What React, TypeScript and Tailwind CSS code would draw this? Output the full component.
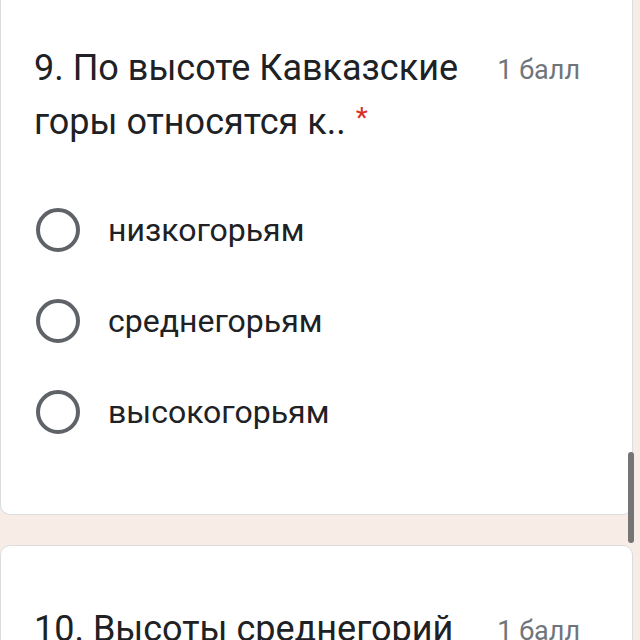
import React from "react";

const options = ["низкогорьям", "среднегорьям", "высокогорьям"];

function Radio() {
  return <div className="w-[44px] h-[44px] rounded-full border-[4px] border-[#5f6368] shrink-0" />;
}

export default function App() {
  return (
    <div
      className="relative w-[640px] h-[640px] overflow-hidden bg-[#f8ece6]"
      style={{ fontFamily: "Roboto, 'Noto Sans', sans-serif" }}
    >
      <div className="flex flex-col gap-[30px] w-[633px]">
        <div className="bg-white border border-t-0 border-[#dadce0] rounded-b-[10px] h-[515px] pl-[33px] pr-[52px] pt-[41px]">
          <div className="flex justify-between items-start">
            <div className="text-[36px] leading-[54px] text-[#202124] w-[440px]">
              9. По высоте Кавказские горы относятся к..
              <span className="text-[#d93025] text-[28px] relative top-[-7px] ml-[10px]">*</span>
            </div>
            <div className="text-[27px] leading-[54px] text-[#70757a] pt-[2px]">1 балл</div>
          </div>
          <div className="flex flex-col gap-[47px] mt-[56px] pl-[2px]">
            {options.map((o) => (
              <div key={o} className="flex items-center gap-[28px] h-[44px]">
                <Radio />
                <span className="text-[32px] text-[#202124]">{o}</span>
              </div>
            ))}
          </div>
        </div>
        <div className="bg-white border border-[#dadce0] rounded-t-[10px] h-[200px] pl-[33px] pr-[52px] pt-[56px]">
          <div className="flex justify-between items-start">
            <div className="text-[36px] leading-[54px] text-[#202124] whitespace-nowrap">
              10. Высоты среднегорий
            </div>
            <div className="text-[27px] leading-[54px] text-[#70757a] pt-[2px]">1 балл</div>
          </div>
        </div>
      </div>
      <div className="absolute left-[628px] top-[452px] w-[6px] h-[91px] rounded-full bg-[#757575]" />
    </div>
  );
}
